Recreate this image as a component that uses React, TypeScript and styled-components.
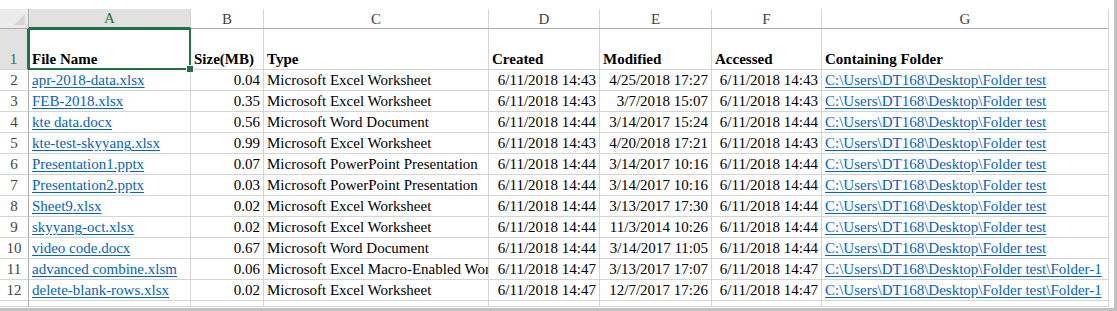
import React from 'react'
import styled, { createGlobalStyle, css } from 'styled-components'

const GlobalStyle = createGlobalStyle`
  html, body {
    margin: 0;
    padding: 0;
    background: #ffffff;
  }
  body {
    font-family: "Liberation Serif", "Times New Roman", serif;
  }
`

const GREEN = '#217346'
const GRID = '#d4d4d4'
const HEAD_LINE = '#ababab'

const Frame = styled.div`
  box-sizing: border-box;
  width: 1117px;
  height: 311px;
  padding-top: 9px;
  border-right: 3px solid #c2c2c2;
  border-bottom: 3px solid #c2c2c2;
  overflow: hidden;
  background: #fff;
`

const Sheet = styled.div`
  display: grid;
  grid-template-columns: 29px 162px 73px 225px 111px 112px 110px 287px;
  grid-template-rows: 20px 41px repeat(11, 21px) 6px;
  font-family: "Liberation Serif", "Times New Roman", serif;
  font-size: 15px;
  color: #000;
`

const Corner = styled.div`
  box-sizing: border-box;
  background: #ebebeb;
  border-right: 1px solid ${HEAD_LINE};
  border-bottom: 1px solid ${HEAD_LINE};
  display: flex;
  align-items: flex-end;
  justify-content: flex-end;
  padding: 0 3px 3px 0;
`

const ColHead = styled.div<{ $selected?: boolean }>`
  box-sizing: border-box;
  display: flex;
  align-items: center;
  justify-content: center;
  background: ${p => (p.$selected ? '#e1e1e1' : '#ffffff')};
  color: ${p => (p.$selected ? GREEN : '#444')};
  border-right: 1px solid ${GRID};
  border-bottom: ${p => (p.$selected ? `2px solid ${GREEN}` : `1px solid ${HEAD_LINE}`)};
  line-height: 1;
  padding-top: 1px;
`

const RowHead = styled.div<{ $selected?: boolean }>`
  box-sizing: border-box;
  display: flex;
  align-items: flex-end;
  justify-content: center;
  padding-bottom: 1px;
  line-height: 18px;
  background: ${p => (p.$selected ? '#e1e1e1' : '#ffffff')};
  color: ${p => (p.$selected ? GREEN : '#444')};
  border-right: ${p => (p.$selected ? `2px solid ${GREEN}` : `1px solid ${HEAD_LINE}`)};
  border-bottom: 1px solid ${GRID};
`

const Cell = styled.div<{ $align?: 'left' | 'right'; $bold?: boolean }>`
  box-sizing: border-box;
  position: relative;
  display: flex;
  align-items: flex-end;
  justify-content: ${p => (p.$align === 'right' ? 'flex-end' : 'flex-start')};
  padding: 0 3px 1px 3px;
  line-height: 18px;
  white-space: nowrap;
  overflow: hidden;
  border-right: 1px solid ${GRID};
  border-bottom: 1px solid ${GRID};
  ${p =>
    p.$bold &&
    css`
      font-weight: 700;
    `}
`

const SelectedCell = styled(Cell)`
  overflow: visible;
  z-index: 2;
`

const Selection = styled.div`
  position: absolute;
  top: -1px;
  left: -1px;
  right: -1px;
  bottom: -1px;
  border: 2px solid ${GREEN};
  pointer-events: none;
`

const Handle = styled.div`
  position: absolute;
  right: -5px;
  bottom: -5px;
  width: 6px;
  height: 6px;
  background: ${GREEN};
  border: 1px solid #fff;
`

const Link = styled.span`
  color: #0563c1;
  text-decoration: underline;
  text-underline-offset: 2px;
`

type Row = {
  name: string
  size: string
  type: string
  created: string
  modified: string
  accessed: string
  folder: string
}

const BASE = 'C:\\Users\\DT168\\Desktop\\Folder test'
const SUB = BASE + '\\Folder-1'

const rows: Row[] = [
  { name: 'apr-2018-data.xlsx', size: '0.04', type: 'Microsoft Excel Worksheet', created: '6/11/2018 14:43', modified: '4/25/2018 17:27', accessed: '6/11/2018 14:43', folder: BASE },
  { name: 'FEB-2018.xlsx', size: '0.35', type: 'Microsoft Excel Worksheet', created: '6/11/2018 14:43', modified: '3/7/2018 15:07', accessed: '6/11/2018 14:43', folder: BASE },
  { name: 'kte data.docx', size: '0.56', type: 'Microsoft Word Document', created: '6/11/2018 14:44', modified: '3/14/2017 15:24', accessed: '6/11/2018 14:44', folder: BASE },
  { name: 'kte-test-skyyang.xlsx', size: '0.99', type: 'Microsoft Excel Worksheet', created: '6/11/2018 14:43', modified: '4/20/2018 17:21', accessed: '6/11/2018 14:43', folder: BASE },
  { name: 'Presentation1.pptx', size: '0.07', type: 'Microsoft PowerPoint Presentation', created: '6/11/2018 14:44', modified: '3/14/2017 10:16', accessed: '6/11/2018 14:44', folder: BASE },
  { name: 'Presentation2.pptx', size: '0.03', type: 'Microsoft PowerPoint Presentation', created: '6/11/2018 14:44', modified: '3/14/2017 10:16', accessed: '6/11/2018 14:44', folder: BASE },
  { name: 'Sheet9.xlsx', size: '0.02', type: 'Microsoft Excel Worksheet', created: '6/11/2018 14:44', modified: '3/13/2017 17:30', accessed: '6/11/2018 14:44', folder: BASE },
  { name: 'skyyang-oct.xlsx', size: '0.02', type: 'Microsoft Excel Worksheet', created: '6/11/2018 14:44', modified: '11/3/2014 10:26', accessed: '6/11/2018 14:44', folder: BASE },
  { name: 'video code.docx', size: '0.67', type: 'Microsoft Word Document', created: '6/11/2018 14:44', modified: '3/14/2017 11:05', accessed: '6/11/2018 14:44', folder: BASE },
  { name: 'advanced combine.xlsm', size: '0.06', type: 'Microsoft Excel Macro-Enabled Worksheet', created: '6/11/2018 14:47', modified: '3/13/2017 17:07', accessed: '6/11/2018 14:47', folder: SUB },
  { name: 'delete-blank-rows.xlsx', size: '0.02', type: 'Microsoft Excel Worksheet', created: '6/11/2018 14:47', modified: '12/7/2017 17:26', accessed: '6/11/2018 14:47', folder: SUB },
]

const letters = ['A', 'B', 'C', 'D', 'E', 'F', 'G']
const headings = ['Size(MB)', 'Type', 'Created', 'Modified', 'Accessed', 'Containing Folder']

function App() {
  return (
    <Frame>
      <GlobalStyle />
      <Sheet>
        <Corner>
          <svg width="11" height="11" viewBox="0 0 11 11">
            <polygon points="11,0 11,11 0,11" fill="#d6d6d6" />
          </svg>
        </Corner>
        {letters.map((l, i) => (
          <ColHead key={l} $selected={i === 0}>
            {l}
          </ColHead>
        ))}

        <RowHead $selected>1</RowHead>
        <SelectedCell $bold>
          File Name
          <Selection>
            <Handle />
          </Selection>
        </SelectedCell>
        {headings.map(h => (
          <Cell key={h} $bold>
            {h}
          </Cell>
        ))}

        {rows.map((r, i) => (
          <React.Fragment key={r.name}>
            <RowHead>{i + 2}</RowHead>
            <Cell>
              <Link>{r.name}</Link>
            </Cell>
            <Cell $align="right">{r.size}</Cell>
            <Cell>{r.type}</Cell>
            <Cell $align="right">{r.created}</Cell>
            <Cell $align="right">{r.modified}</Cell>
            <Cell $align="right">{r.accessed}</Cell>
            <Cell>
              <Link>{r.folder}</Link>
            </Cell>
          </React.Fragment>
        ))}

        <RowHead />
        {letters.map(l => (
          <Cell key={'r13' + l} />
        ))}
      </Sheet>
    </Frame>
  )
}

export default App
